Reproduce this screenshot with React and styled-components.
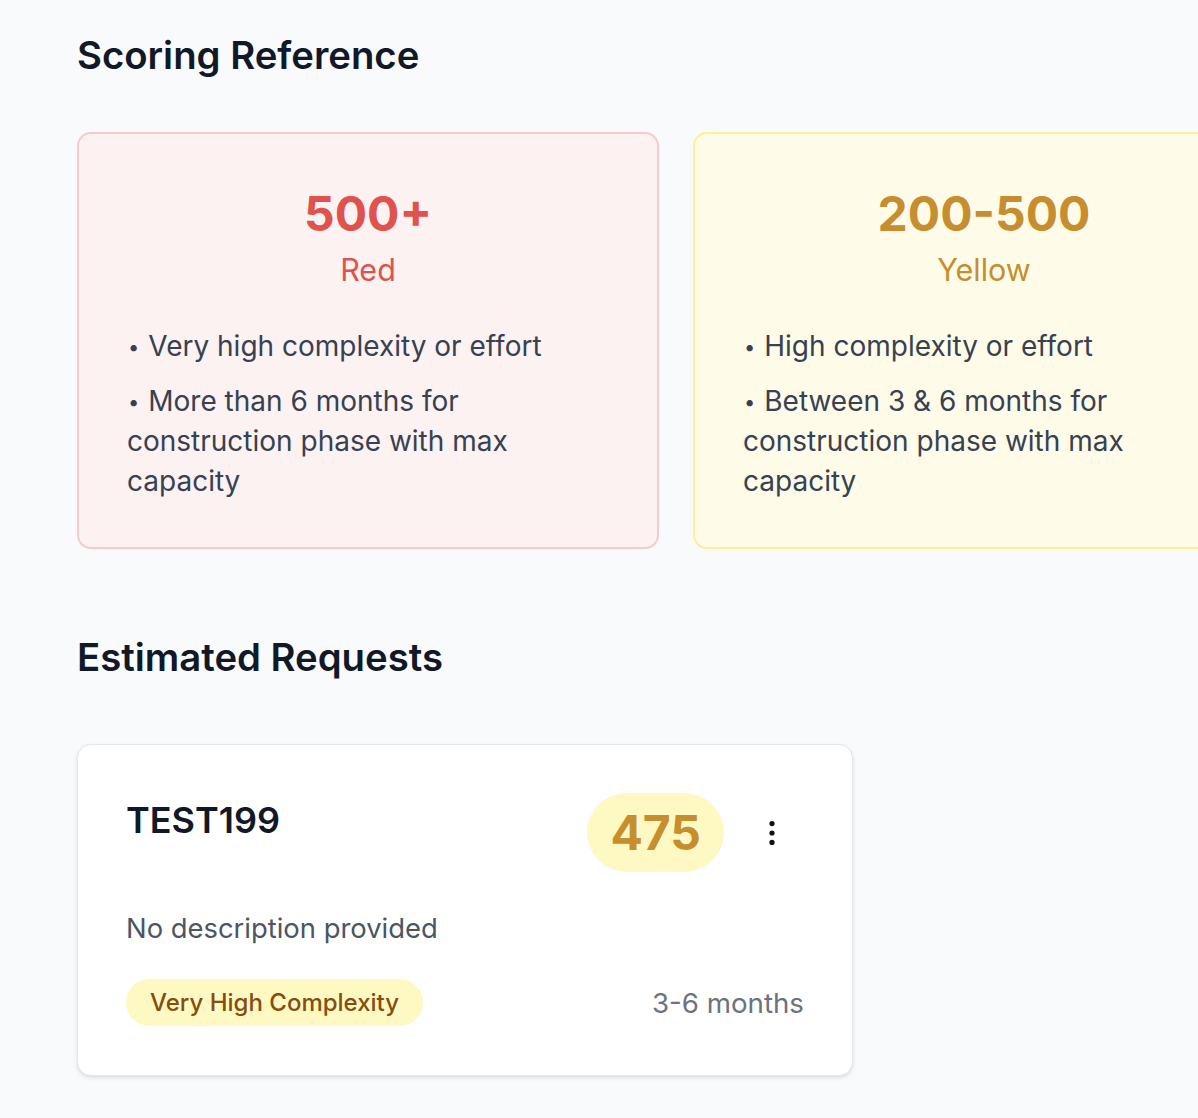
import React from "react";
import styled, { createGlobalStyle } from "styled-components";

const Global = createGlobalStyle`
  html, body { margin: 0; padding: 0; background: #f9fafb; overflow: hidden; }
  body { font-family: Inter, "Noto Sans", "Liberation Sans", sans-serif; color: #111827; -webkit-font-smoothing: antialiased; }
  * { box-sizing: border-box; }
`;

const Page = styled.main`
  padding: 33px 0 40px 77px;
  width: 1400px;
`;

const SectionTitle = styled.h2`
  margin: 0;
  font-size: 38.3px;
  line-height: 45px;
  font-weight: 600;
  color: #111827;
`;

const RangeGrid = styled.div`
  display: flex;
  gap: 34px;
  margin-top: 54px;
  margin-bottom: 86px;
`;

const tones = {
  red: { bg: "#fdf2f2", border: "#f8caca", text: "#e0524d" },
  yellow: { bg: "#fefce9", border: "#fdf095", text: "#c78e2f" },
};

const RangeCard = styled.section`
  width: 582px;
  flex: none;
  background: ${(p) => tones[p.$tone].bg};
  border: 2px solid ${(p) => tones[p.$tone].border};
  border-radius: 14px;
  padding: 51px 48px 46px;
`;

const RangeValue = styled.div`
  text-align: center;
  font-size: 48px;
  line-height: 57px;
  font-weight: 700;
  color: ${(p) => tones[p.$tone].text};
`;

const RangeLabel = styled.div`
  text-align: center;
  font-size: 30.5px;
  line-height: 45px;
  font-weight: 400;
  color: ${(p) => tones[p.$tone].text};
  margin-top: 5px;
`;

const BulletList = styled.ul`
  list-style: none;
  margin: 34px 0 0;
  padding: 0;
  display: flex;
  flex-direction: column;
  gap: 15px;
`;

const Bullet = styled.li`
  font-size: 28px;
  line-height: 40px;
  color: #374151;
`;

const Marker = styled.span`
  font-size: 20px;
  line-height: 0;
  margin-left: 1px;
  margin-right: 9px;
  vertical-align: 2px;
`;

const RequestCard = styled.article`
  width: 776px;
  margin-top: 64px;
  background: #ffffff;
  border: 1px solid #e5e7eb;
  border-radius: 14px;
  box-shadow: 0 2px 5px rgba(0, 0, 0, 0.09), 0 1px 2px rgba(0, 0, 0, 0.04);
  padding: 48px 48px 49px;
`;

const CardHeader = styled.div`
  display: flex;
  align-items: flex-start;
  justify-content: space-between;
`;

const RequestTitle = styled.h3`
  margin: 0;
  font-size: 36px;
  line-height: 54px;
  font-weight: 600;
  color: #111827;
`;

const HeaderRight = styled.div`
  display: flex;
  align-items: center;
  gap: 16px;
`;

const ScorePill = styled.div`
  background: #fef9c3;
  color: #c78e2f;
  font-size: 48px;
  line-height: 57px;
  font-weight: 700;
  padding: 11px 23px;
  border-radius: 999px;
`;

const MenuButton = styled.button`
  width: 64px;
  height: 64px;
  border: none;
  background: transparent;
  padding: 0;
  display: flex;
  align-items: center;
  justify-content: center;
  cursor: pointer;
`;

const Description = styled.p`
  margin: 36px 0 0;
  font-size: 27.4px;
  line-height: 40px;
  color: #4b5563;
`;

const CardFooter = styled.div`
  margin-top: 31px;
  display: flex;
  align-items: center;
  justify-content: space-between;
`;

const Tag = styled.span`
  background: #fef9c3;
  color: #854d0e;
  font-size: 24px;
  line-height: 35px;
  font-weight: 500;
  padding: 6px 24px;
  border-radius: 999px;
`;

const Duration = styled.span`
  font-size: 27.7px;
  line-height: 40px;
  color: #6b7280;
`;

const ranges = [
  {
    tone: "red",
    value: "500+",
    label: "Red",
    bullets: [
      "Very high complexity or effort",
      "More than 6 months for construction phase with max capacity",
    ],
  },
  {
    tone: "yellow",
    value: "200-500",
    label: "Yellow",
    bullets: [
      "High complexity or effort",
      "Between 3 & 6 months for construction phase with max capacity",
    ],
  },
];

const DotsIcon = () => (
  <svg width="12" height="30" viewBox="0 0 12 30" aria-hidden="true">
    <circle cx="6" cy="5.6" r="2.6" fill="#111111" />
    <circle cx="6" cy="15" r="2.6" fill="#111111" />
    <circle cx="6" cy="24.4" r="2.6" fill="#111111" />
  </svg>
);

export default function App() {
  return (
    <>
      <Global />
      <Page>
        <SectionTitle>Scoring Reference</SectionTitle>
        <RangeGrid>
          {ranges.map((r) => (
            <RangeCard key={r.tone} $tone={r.tone}>
              <RangeValue $tone={r.tone}>{r.value}</RangeValue>
              <RangeLabel $tone={r.tone}>{r.label}</RangeLabel>
              <BulletList>
                {r.bullets.map((b) => (
                  <Bullet key={b}>
                    <Marker>•</Marker>
                    {b}
                  </Bullet>
                ))}
              </BulletList>
            </RangeCard>
          ))}
        </RangeGrid>
        <SectionTitle>Estimated Requests</SectionTitle>
        <RequestCard>
          <CardHeader>
            <RequestTitle>TEST199</RequestTitle>
            <HeaderRight>
              <ScorePill>475</ScorePill>
              <MenuButton aria-label="More options">
                <DotsIcon />
              </MenuButton>
            </HeaderRight>
          </CardHeader>
          <Description>No description provided</Description>
          <CardFooter>
            <Tag>Very High Complexity</Tag>
            <Duration>3-6 months</Duration>
          </CardFooter>
        </RequestCard>
      </Page>
    </>
  );
}
